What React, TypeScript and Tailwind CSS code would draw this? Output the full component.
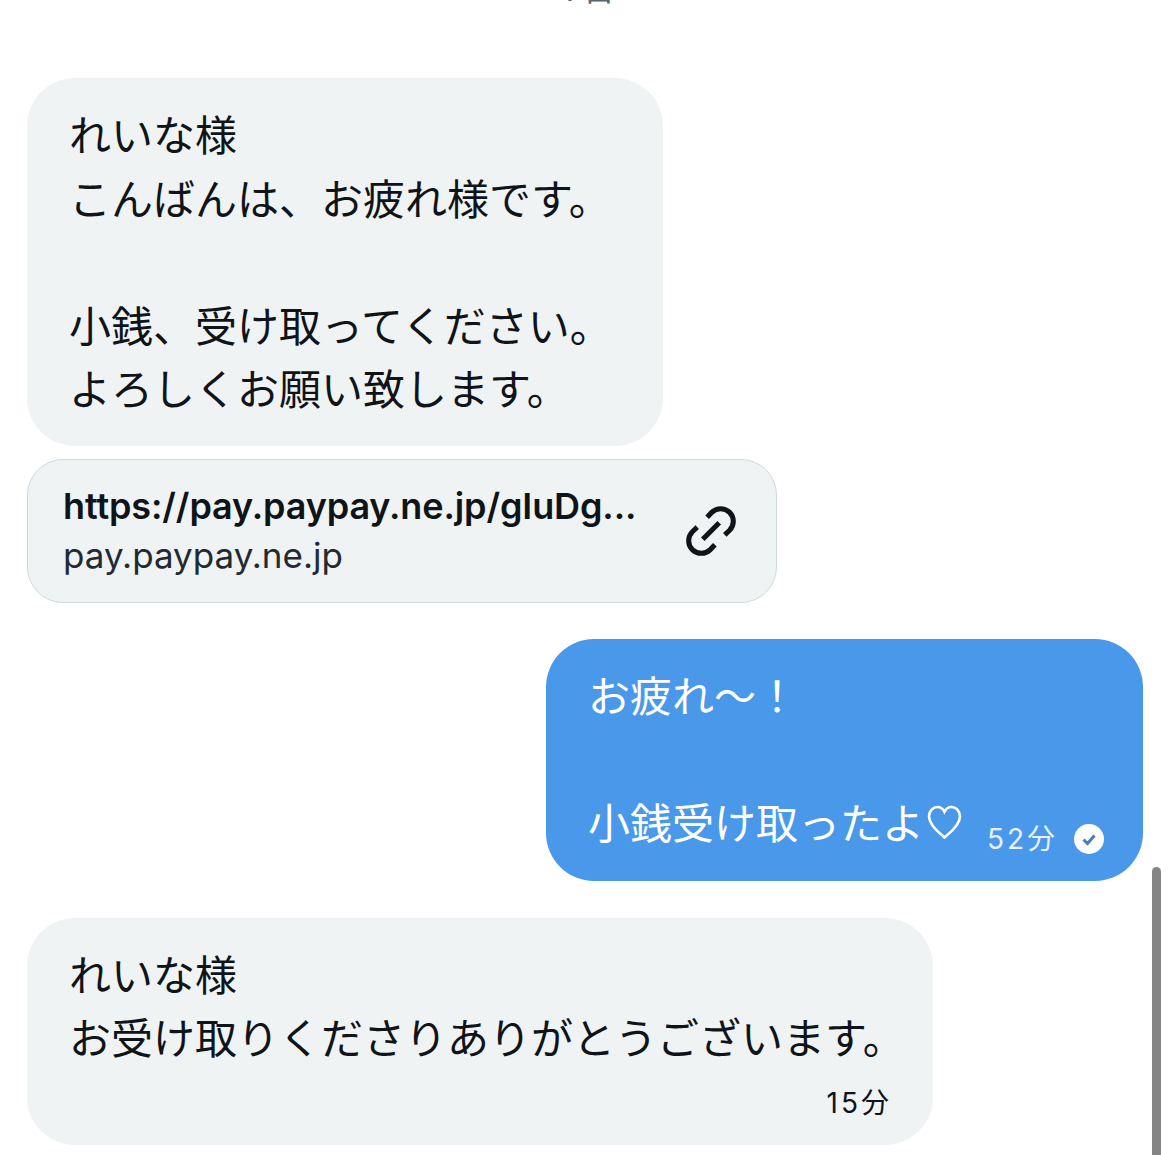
import React from "react";

const cjk = "font-['Inter','Noto_Sans_CJK_JP',sans-serif]";

function Line({ children }: { children?: React.ReactNode }) {
  return <div className="h-[63.5px] leading-[63.5px] whitespace-pre">{children}</div>;
}

export default function App() {
  return (
    <div className={`relative h-[1155px] w-[1170px] overflow-hidden bg-white text-[#0f1419] ${cjk}`}>
      <div className="absolute right-[9px] top-[867px] h-[300px] w-[9px] rounded-full bg-[#858585]" />
      <div className="flex flex-col pl-[27px] pr-[27px]">
        <div className="-mt-[28px] h-[36px] pl-[10px] text-center text-[32px] leading-[36px] text-[#5b6670]">7日</div>

        <div className="mt-[70px] w-[636px] rounded-[48px] bg-[#eff3f4] pb-[24px] pl-[42px] pt-[26px] text-[42px]">
          <Line>れいな様</Line>
          <Line>こんばんは、お疲れ様です。</Line>
          <Line> </Line>
          <Line>小銭、受け取ってください。</Line>
          <Line>よろしくお願い致します。</Line>
        </div>

        <div className="mt-[13px] flex h-[144px] w-[750px] items-center justify-between rounded-[36px] border border-[#cfd9de] bg-[#eff3f4] pl-[35px] pr-[36px]">
          <div className="flex flex-col">
            <div className="text-[36px] font-semibold leading-[49px] tracking-[-0.12px]">https://pay.paypay.ne.jp/gIuDg...</div>
            <div className="text-[35px] leading-[49px] text-[#1f2a33]">pay.paypay.ne.jp</div>
          </div>
          <svg width="58" height="58" viewBox="0 0 24 24" fill="none" stroke="#0f1419" strokeWidth="2.1" strokeLinecap="butt">
            <path d="M13.6 17.7l-1.9 2.0a5.2 5.2 0 0 1-7.4-7.4l2-1.9" />
            <path d="M10.4 6.3l1.9-2a5.2 5.2 0 0 1 7.4 7.4l-2 1.9" />
            <path d="M8.6 15.4l6.8-6.8" />
          </svg>
        </div>

        <div className="mt-[36px] flex h-[242px] w-[597px] flex-col self-end rounded-[48px] bg-[#4a98e9] pl-[42px] pt-[26px] text-[42px] text-white">
          <Line>お疲れ〜！</Line>
          <Line> </Line>
          <div className="flex items-center">
            <Line>小銭受け取ったよ</Line>
            <svg className="ml-[3px] mt-[-2px]" width="35" height="35" viewBox="0 0 35 35" fill="none" stroke="#fff" strokeWidth="2.6">
              <path d="M17.5 32.5C13 28.5 2 20.5 2 11.5C2 5.8 6.2 2 10.5 2C13.5 2 16 3.8 17.5 6.8C19 3.8 21.5 2 24.5 2C28.8 2 33 5.8 33 11.5C33 20.5 22 28.5 17.5 32.5Z" />
            </svg>
            <span className="ml-[25px] mt-[30px] text-[28px] leading-[34px] tracking-[3px] text-[#e6f1fc]">52分</span>
            <svg className="ml-[16px] mt-[30px]" width="30" height="30" viewBox="0 0 30 30">
              <circle cx="15" cy="15" r="15" fill="#fff" />
              <path d="M9.5 15.5l4 4 7-8" fill="none" stroke="#4d7db5" strokeWidth="3" />
            </svg>
          </div>
        </div>

        <div className="mt-[37px] flex h-[227px] w-[906px] flex-col rounded-[48px] bg-[#eff3f4] pl-[42px] pr-[41px] pt-[26px] text-[42px]">
          <Line>れいな様</Line>
          <Line>お受け取りくださりありがとうございます。</Line>
          <div className="mt-[15px] self-end text-[28px] leading-[34px] tracking-[3px]">15分</div>
        </div>
      </div>
    </div>
  );
}
